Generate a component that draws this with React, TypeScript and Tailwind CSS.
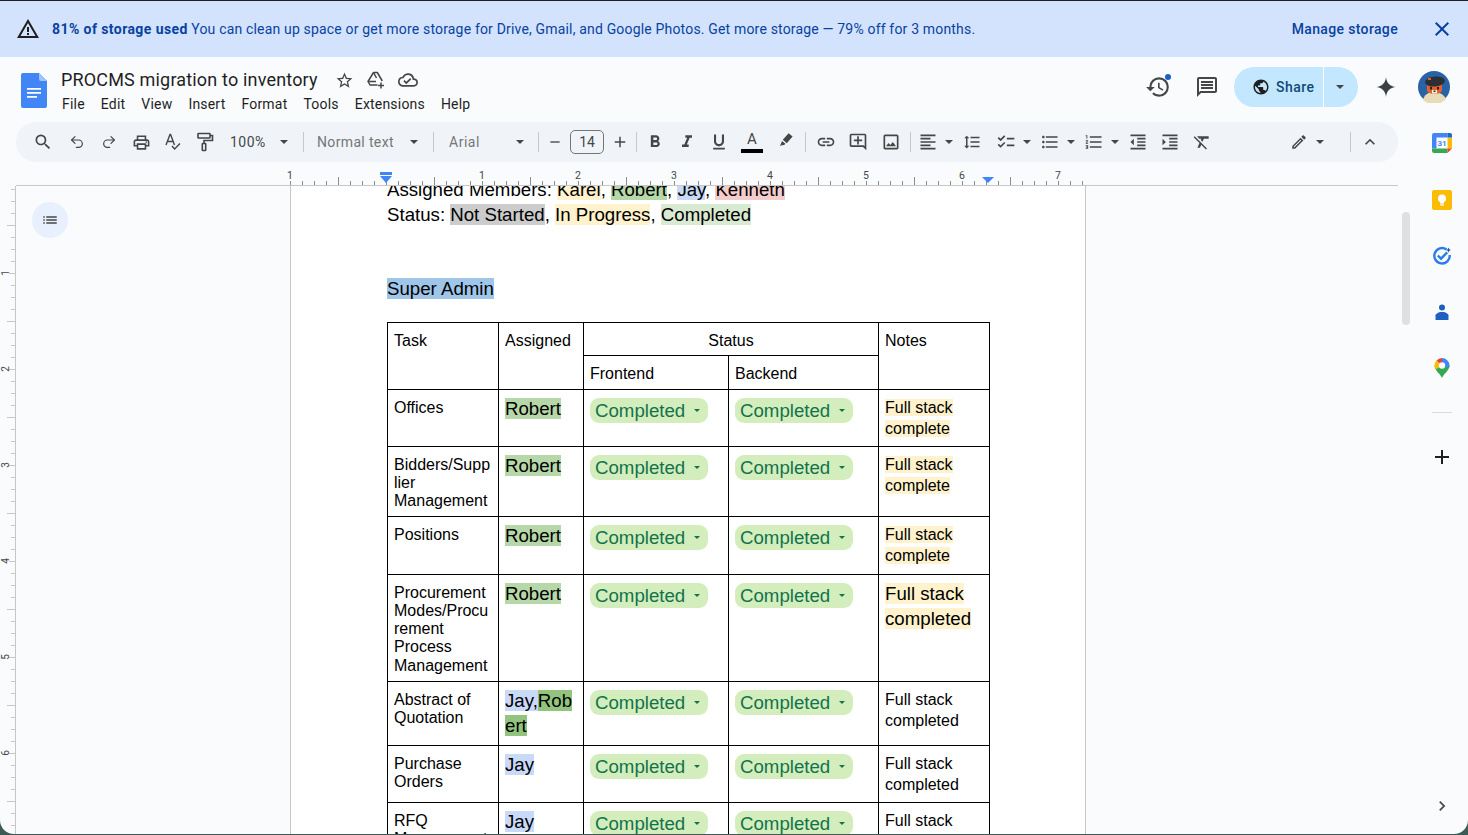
import React from 'react';
import { Redo2, Undo2 } from 'lucide-react';
import {
  MdAdd,
  MdChecklist,
  MdChevronRight,
  MdClose,
  MdExpandLess,
  MdFormatAlignLeft,
  MdFormatBold,
  MdFormatClear,
  MdFormatIndentDecrease,
  MdFormatIndentIncrease,
  MdFormatItalic,
  MdFormatLineSpacing,
  MdFormatListBulleted,
  MdFormatListNumbered,
  MdFormatUnderlined,
  MdLink,
  MdList,
  MdOutlineAddComment,
  MdOutlineCloudDone,
  MdOutlineEdit,
  MdOutlineHistory,
  MdOutlineImage,
  MdOutlineLocalPrintshop,
  MdOutlineSearch,
  MdOutlineInsertComment,
  MdPublic,
  MdRemove,
  MdStarBorder,
  MdWarningAmber,
} from 'react-icons/md';

const menus = ['File', 'Edit', 'View', 'Insert', 'Format', 'Tools', 'Extensions', 'Help'];
const rulerLabels = [
  { x: 290, text: '1' },
  { x: 482, text: '1' },
  { x: 578, text: '2' },
  { x: 674, text: '3' },
  { x: 770, text: '4' },
  { x: 866, text: '5' },
  { x: 962, text: '6' },
  { x: 1058, text: '7' },
];

const Caret = ({ className = '' }: { className?: string }) => (
  <span className={`inline-block h-0 w-0 border-x-[4px] border-t-[4px] border-x-transparent border-t-[#444746] ${className}`} />
);

const Divider = ({ className = '' }: { className?: string }) => <div className={`h-5 w-px bg-[#c7c7c7] ${className}`} />;

const ToolButton = ({ children, className = '' }: { children: React.ReactNode; className?: string }) => (
  <div className={`flex h-8 w-8 shrink-0 items-center justify-center text-[#444746] ${className}`}>{children}</div>
);

const DocsLogo = () => (
  <svg width="26" height="35" viewBox="0 0 26 35">
    <path d="M2 0h16l8 8v25a2 2 0 0 1-2 2H2a2 2 0 0 1-2-2V2a2 2 0 0 1 2-2z" fill="#4285f4" />
    <path d="M18 0l8 8h-6a2 2 0 0 1-2-2z" fill="#a1c2fa" />
    <path d="M6 15h14v1.7H6zM6 19h14v1.7H6zM6 23h10v1.7H6z" fill="#fff" />
  </svg>
);

const AddToDriveIcon = () => (
  <svg width="20" height="20" viewBox="0 0 20 20" fill="none" stroke="#444746" strokeWidth="1.5">
    <path d="M7.500 2.500h3.800l5 8.500M7.500 2.500L2 11.500l2 3.500h7.500" strokeLinejoin="round" />
    <path d="M2 11.500h8M7.500 2.500l3 5.500" />
    <path d="M15 12.500v6M12 15.500h6" />
  </svg>
);

const SpellIcon = () => (
  <svg width="18" height="18" viewBox="0 0 18 18" fill="none" stroke="#444746" strokeWidth="1.4">
    <path d="M2 12L6 1.500h.6L10.500 12M3.400 8.500h5.800" />
    <path d="M8 13l2.600 3L16 10.500" />
  </svg>
);

const PaintIcon = () => (
  <svg width="18" height="20" viewBox="0 0 18 20" fill="none" stroke="#444746" strokeWidth="1.6">
    <rect x="2" y="1.500" width="12" height="4.500" rx="0.6" />
    <path d="M14 3.500h2.500v5H8v3" />
    <rect x="6.300" y="11.500" width="3.400" height="7" rx="0.5" />
  </svg>
);

const HighlightIcon = () => (
  <svg width="16" height="16" viewBox="0 0 16 16" fill="#444746" className="-mt-[4px]">
    <path d="M10.600 1.200l4 3.400-5.800 6.600-4-3.400zM4 8.900l3.400 2.900-1.200 1.300-2.400.2L2 13.900z" />
  </svg>
);

const Avatar = () => (
  <svg width="32" height="32" viewBox="0 0 32 32">
    <circle cx="16" cy="16" r="16" fill="#2a62a8" />
    <path d="M5 29c1-5 5-8 11-8s10 3 12 7a16 16 0 0 1-23 1z" fill="#e8dcb8" />
    <path d="M9 14h15v6c-2 4-13 4-15 0z" fill="#e2622b" />
    <rect x="12" y="16" width="2" height="2.500" fill="#222" />
    <rect x="19" y="16" width="2" height="2.500" fill="#222" />
    <path d="M14 19h5v3.500h-5z" fill="#fff3df" />
    <path d="M15.500 19.500h2v1.500h-2z" fill="#222" />
    <ellipse cx="17" cy="10.500" rx="10" ry="5" fill="#2b3035" transform="rotate(-6 17 10.500)" />
    <rect x="10" y="7" width="3" height="2" fill="#e2622b" />
  </svg>
);

const CalendarIcon = () => (
  <svg width="20" height="20" viewBox="0 0 20 20">
    <rect width="20" height="20" rx="1.500" fill="#fff" />
    <path d="M0 2a2 2 0 0 1 2-2h13.500v4.500H4.500v11H0z" fill="#4285f4" />
    <path d="M15.500 4.500H20v11h-4.500z" fill="#fbbc04" />
    <path d="M0 15.500h15.500V20H2a2 2 0 0 1-2-2z" fill="#34a853" />
    <path d="M15.500 15.500H20L15.500 20z" fill="#ea4335" />
    <path d="M15.500 0H18a2 2 0 0 1 2 2v2.500h-4.500z" fill="#1967d2" />
    <text x="10" y="13.200" textAnchor="middle" fontSize="8" fontWeight="700" fill="#4285f4" fontFamily="Roboto, sans-serif">31</text>
  </svg>
);

const KeepIcon = () => (
  <svg width="20" height="20" viewBox="0 0 20 20">
    <rect width="20" height="20" rx="2" fill="#fbbc04" />
    <circle cx="10" cy="8.500" r="4" fill="#fff" />
    <rect x="8" y="11" width="4" height="2.500" fill="#fff" />
    <rect x="8.200" y="14.200" width="3.600" height="1.400" fill="#fff" />
  </svg>
);

const TasksIcon = () => (
  <svg width="20" height="20" viewBox="0 0 20 20" fill="none">
    <path d="M14.500 3.500A7.700 7.700 0 1 0 17.700 9" stroke="#2b7de9" strokeWidth="2.400" />
    <path d="M5.800 9.500l3.200 3.200 6.200-6.400" stroke="#2b7de9" strokeWidth="2.400" />
    <path d="M16.500 1.500l.8 1.700 1.700.8-1.700.8-.8 1.700-.8-1.700-1.700-.8 1.700-.8z" fill="#1a56b0" />
  </svg>
);

const ContactsIcon = () => (
  <svg width="16" height="16" viewBox="0 0 16 16">
    <circle cx="8" cy="3.400" r="3" fill="#1f5fbf" />
    <path d="M1 16v-3c0-3 3-5 7-5s7 2 7 5v3z" fill="#1f5fbf" />
    <path d="M1 16v-3c0-1 .4-2 1-2.700V16zM15 16v-3c0-1-.4-2-1-2.700V16z" fill="#8ab4f8" />
  </svg>
);

const MapsIcon = () => (
  <svg width="16" height="20" viewBox="0 0 16 20" fill="none">
    <path d="M8 20C6.500 16 .5 12.500.5 7.500h15C15.500 12.500 9.500 16 8 20z" fill="#34a853" />
    <path d="M2.500 2.500A7.500 7.500 0 0 0 .5 7.500c0 1.500.5 2.800 1.200 4L8 7.500z" fill="#fbbc04" />
    <path d="M2.500 2.500A7.500 7.500 0 0 1 8 0v7.500z" fill="#ea4335" />
    <path d="M8 0a7.500 7.500 0 0 1 7.500 7.500c0 .8-.1 1.500-.4 2.200L8 7.500z" fill="#4285f4" />
    <circle cx="8" cy="7.500" r="3.200" fill="#f9fbfd" />
  </svg>
);

const HorizontalRuler = () => {
  const ticks = Array.from({ length: 67 }, (_, i) => 290 + i * 12);
  return (
    <svg width="1382" height="24" viewBox="16 162 1382 24" className="block">
      {ticks.map((x, i) => (
        <line key={x} x1={x + 0.5} x2={x + 0.5} y1={i % 4 === 0 ? 177 : 181} y2="185" stroke="#8a8d90" strokeWidth="1" />
      ))}
      {rulerLabels.map((label) => (
        <g key={label.x}>
          <rect x={label.x - 5} y="169" width="10" height="12" fill="#f9fbfd" />
          <text x={label.x} y="179" textAnchor="middle" fontSize="10.500" fill="#444746" fontFamily="Roboto, sans-serif">
            {label.text}
          </text>
        </g>
      ))}
      <line x1="16" x2="1398" y1="185.500" y2="185.500" stroke="#c7c7c7" />
      <rect x="380" y="172" width="12" height="3" fill="#4285f4" />
      <path d="M380 176h12l-6 7z" fill="#4285f4" />
      <path d="M982 177h12l-6 6z" fill="#4285f4" />
    </svg>
  );
};

const VerticalRuler = () => {
  const ticks = Array.from({ length: 55 }, (_, i) => 189 + i * 12);
  const labels = [273, 369, 465, 561, 657, 753];
  return (
    <svg width="16" height="649" viewBox="0 186 16 649" className="block shrink-0">
      {ticks.map((y) => (
        <line key={y} x1={(y - 225) % 48 === 0 ? 7 : 11} x2="15" y1={y + 0.5} y2={y + 0.5} stroke="#c7c7c7" />
      ))}
      {labels.map((y, i) => (
        <g key={y}>
          <rect x="0" y={y - 5} width="9" height="10" fill="#f9fbfd" />
          <text
            x="5"
            y={y + 4}
            textAnchor="middle"
            fontSize="10"
            fill="#444746"
            fontFamily="Roboto, sans-serif"
            transform={`rotate(-90 5 ${y})`}
          >
            {i + 1}
          </text>
        </g>
      ))}
      <line x1="15.500" x2="15.500" y1="186" y2="835" stroke="#c7c7c7" />
    </svg>
  );
};

const StatusPill = () => (
  <div className="flex h-[25px] w-[118px] items-center rounded-[9px] bg-[#d4edbc] pl-[5px] text-[18.670px] leading-[25px] text-[#11734b]">
    Completed
    <span className="ml-[9px] h-0 w-0 border-x-[3px] border-t-[3px] border-x-transparent border-t-[#11734b]" />
  </div>
);

const cell = 'border border-black p-0 align-top';

const TaskCell = ({ lines }: { lines: string[] }) => (
  <td className={`${cell} px-[6px] pt-[9px] text-[16px] leading-[18.300px]`}>
    {lines.map((line) => (
      <div key={line}>{line}</div>
    ))}
  </td>
);

const Mark = ({ color, children }: { color: string; children: React.ReactNode }) => (
  <span className={color}>{children}</span>
);

const AssignedCell = ({ children }: { children: React.ReactNode }) => (
  <td className={`${cell} px-[6px] pt-[6px] text-[18.670px] leading-[25px]`}>{children}</td>
);

const PillCell = () => (
  <td className={`${cell} px-[6px] pt-[8px]`}>
    <StatusPill />
  </td>
);

const NotesCell = ({ highlight, large, second }: { highlight?: boolean; large?: boolean; second: string }) => (
  <td className={`${cell} px-[6px] ${large ? 'pt-[6px] text-[18.670px] leading-[25px]' : 'pt-[7px] text-[16px] leading-[21.300px]'}`}>
    <div>
      <span className={highlight ? 'bg-[#fff2cc]' : ''}>Full stack</span>
    </div>
    <div>
      <span className={highlight ? 'bg-[#fff2cc]' : ''}>{second}</span>
    </div>
  </td>
);

const StatusRow = ({
  height,
  task,
  assigned,
  notes,
}: {
  height: string;
  task: string[];
  assigned: React.ReactNode;
  notes: React.ReactNode;
}) => (
  <tr className={height}>
    <TaskCell lines={task} />
    <AssignedCell>{assigned}</AssignedCell>
    <PillCell />
    <PillCell />
    {notes}
  </tr>
);

const robert = <Mark color="bg-[#b6d7a8]">Robert</Mark>;
const jay = <Mark color="bg-[#c9daf8]">Jay</Mark>;

const App: React.FC = () => {
  return (
    <div className="h-[835px] w-[1468px] overflow-hidden bg-[#3d5a54] font-['Roboto',sans-serif]">
      <div className="flex h-[834px] w-full flex-col overflow-hidden rounded-b-[14px] bg-[#f9fbfd]">
        <div className="h-px shrink-0 bg-[#1f1f1f]" />

        {/* storage banner */}
        <div className="flex h-[56px] shrink-0 items-center bg-[#d3e3fd] pl-[16px] pr-[14px]">
          <MdWarningAmber size={24} className="text-[#1f1f1f]" />
          <p className="ml-[12px] text-[14px] text-[#0842a0]">
            <span className="font-bold tracking-[0.42px]">81% of storage used</span>{' '}
            <span className="tracking-[0.175px]">
              You can clean up space or get more storage for Drive, Gmail, and Google Photos. Get more storage — 79% off for 3 months.
            </span>
          </p>
          <span className="ml-auto text-[14px] font-medium tracking-[0.35px] text-[#0842a0]">Manage storage</span>
          <MdClose size={24} className="ml-[32px] text-[#0842a0]" />
        </div>

        {/* title and menus */}
        <div className="flex h-[65px] shrink-0 items-start pl-[21px] pr-[18px]">
          <div className="mt-[16px]">
            <DocsLogo />
          </div>
          <div className="ml-[14px] mt-[11px]">
            <div className="flex h-[24px] items-center">
              <span className="text-[18px] leading-[24px] tracking-[0.17px] text-[#1f1f1f]">PROCMS migration to inventory</span>
              <MdStarBorder size={19} className="ml-[17px] text-[#444746]" />
              <div className="ml-[12px]"><AddToDriveIcon /></div>
              <MdOutlineCloudDone size={20} className="ml-[12px] text-[#444746]" />
            </div>
            <div className="mt-[2px] flex gap-[16px] pl-px text-[14px] leading-[20px] tracking-[0.2px] text-[#1f1f1f]">
              {menus.map((menu) => (
                <span key={menu}>{menu}</span>
              ))}
            </div>
          </div>
          <div className="ml-auto mt-[10px] flex items-center">
            <div className="relative">
              <MdOutlineHistory size={26} className="text-[#444746]" />
              <span className="absolute right-0 top-0 h-[6px] w-[6px] rounded-full bg-[#1a5fc4]" />
            </div>
            <MdOutlineInsertComment size={24} className="ml-[24px] -scale-x-100 text-[#444746]" />
            <div className="ml-[15px] flex h-[40px] w-[124px] items-center rounded-full bg-[#c2e7ff] text-[#001d35]">
              <MdPublic size={18} className="ml-[18px] text-[#1f1f1f]" />
              <span className="ml-[6px] text-[14px] font-medium tracking-[0.5px] text-[#0f4a75]">Share</span>
              <div className="ml-[8px] h-full w-px bg-white" />
              <Caret className="ml-[12px] border-t-[#1f1f1f]" />
            </div>
            <svg width="24" height="24" viewBox="0 0 24 24" className="ml-[16px]">
              <path d="M12 2c.6 6 4 9.400 10 10-6 .6-9.400 4-10 10-.6-6-4-9.400-10-10 6-.6 9.400-4 10-10z" fill="#3c4043" />
            </svg>
            <div className="ml-[20px]">
              <Avatar />
            </div>
          </div>
        </div>

        <div className="flex min-h-0 flex-1">
          <div className="flex min-w-0 flex-1 flex-col">
            {/* toolbar */}
            <div className="ml-[16px] flex h-[40px] w-[1382px] shrink-0 items-center rounded-full bg-[#f0f4f9] pl-[11px] text-[#444746]">
              <ToolButton><MdOutlineSearch size={20} /></ToolButton>
              <ToolButton className="ml-[2px]"><Undo2 size={16} strokeWidth={1.8} /></ToolButton>
              <ToolButton><Redo2 size={16} strokeWidth={1.8} /></ToolButton>
              <ToolButton><MdOutlineLocalPrintshop size={19} /></ToolButton>
              <ToolButton><SpellIcon /></ToolButton>
              <ToolButton><PaintIcon /></ToolButton>
              <span className="ml-[9px] w-[37px] text-[14px] tracking-[0.5px]">100%</span>
              <Caret className="ml-[13px]" />
              <Divider className="ml-[15px]" />
              <span className="ml-[13px] w-[78px] whitespace-nowrap text-[14px] tracking-[0.35px] text-[#747775]">Normal text</span>
              <Caret className="ml-[15px]" />
              <Divider className="ml-[15px]" />
              <span className="ml-[15px] w-[31px] text-[14px] tracking-[0.5px] text-[#747775]">Arial</span>
              <Caret className="ml-[36px]" />
              <Divider className="ml-[14px]" />
              <ToolButton><MdRemove size={16} /></ToolButton>
              <div className="ml-[-1px] flex h-[24px] w-[34px] shrink-0 items-center justify-center rounded-[5px] border border-[#747775] text-[14px]">14</div>
              <ToolButton><MdAdd size={18} /></ToolButton>
              <Divider />
              <ToolButton className="ml-[2px]"><MdFormatBold size={20} /></ToolButton>
              <ToolButton><MdFormatItalic size={20} /></ToolButton>
              <ToolButton><MdFormatUnderlined size={20} /></ToolButton>
              <div className="ml-[1px] flex h-8 w-8 shrink-0 flex-col items-center justify-center">
                <span className="text-[15px] leading-[16px] text-[#444746]">A</span>
                <span className="mt-[2px] h-[4px] w-[22px] bg-black" />
              </div>
              <ToolButton className="ml-[2px]"><HighlightIcon /></ToolButton>
              <Divider className="ml-[3px]" />
              <ToolButton className="ml-[4px]"><MdLink size={20} /></ToolButton>
              <ToolButton><MdOutlineAddComment size={20} /></ToolButton>
              <ToolButton className="ml-[1px]"><MdOutlineImage size={20} /></ToolButton>
              <Divider className="ml-[3px]" />
              <ToolButton className="ml-[1px]"><MdFormatAlignLeft size={20} /></ToolButton>
              <Caret className="ml-[1px]" />
              <ToolButton className="ml-[3px]"><MdFormatLineSpacing size={18} /></ToolButton>
              <ToolButton className="ml-[2px]"><MdChecklist size={20} /></ToolButton>
              <Caret className="ml-[1px]" />
              <ToolButton className="ml-[3px]"><MdFormatListBulleted size={20} /></ToolButton>
              <Caret className="ml-[1px]" />
              <ToolButton className="ml-[3px]"><MdFormatListNumbered size={20} /></ToolButton>
              <Caret className="ml-[1px]" />
              <ToolButton className="ml-[3px]"><MdFormatIndentDecrease size={20} /></ToolButton>
              <ToolButton><MdFormatIndentIncrease size={20} /></ToolButton>
              <ToolButton><MdFormatClear size={20} /></ToolButton>
              <ToolButton className="ml-[65px]"><MdOutlineEdit size={18} /></ToolButton>
              <Caret className="ml-[1px]" />
              <Divider className="ml-[26px]" />
              <ToolButton className="ml-[3px]"><MdExpandLess size={20} /></ToolButton>
            </div>

            {/* ruler */}
            <div className="ml-[16px] h-[24px] shrink-0">
              <HorizontalRuler />
            </div>

            {/* canvas */}
            <div className="flex min-h-0 flex-1">
              <VerticalRuler />
              <div className="w-[274px] shrink-0 pl-[16px] pt-[16px]">
                <div className="flex h-[36px] w-[36px] items-center justify-center rounded-full bg-[#e8f0fe] text-[#444746]">
                  <MdList size={18} />
                </div>
              </div>
              <div className="h-full w-[796px] shrink-0 overflow-hidden border-x border-[#c7c7c7] bg-white pl-[96px] font-['Liberation_Sans',Arial,sans-serif] text-black">
                <div className="-mt-[8px] text-[18.670px] leading-[24.500px]">
                  <div>
                    Assigned Members: <Mark color="bg-[#fff2cc]">Karel</Mark>, <Mark color="bg-[#b6d7a8]">Robert</Mark>,{' '}
                    <Mark color="bg-[#c9daf8]">Jay</Mark>, <Mark color="bg-[#f4cccc]">Kenneth</Mark>
                  </div>
                  <div>
                    Status: <Mark color="bg-[#cccccc]">Not Started</Mark>, <Mark color="bg-[#fff2cc]">In Progress</Mark>,{' '}
                    <Mark color="bg-[#d9ead3]">Completed</Mark>
                  </div>
                  <div className="h-[50px]" />
                  <div>
                    <Mark color="bg-[#9fc5e8]">Super Admin</Mark>
                  </div>
                </div>
                <table className="mt-[20px] w-[603px] table-fixed border-collapse">
                  <colgroup>
                    <col className="w-[111px]" />
                    <col className="w-[85px]" />
                    <col className="w-[145px]" />
                    <col className="w-[150px]" />
                    <col className="w-[111px]" />
                  </colgroup>
                  <tbody className="text-[16px] leading-[18.300px]">
                    <tr className="h-[33px]">
                      <td rowSpan={2} className={`${cell} px-[6px] pt-[9px]`}>Task</td>
                      <td rowSpan={2} className={`${cell} px-[6px] pt-[9px]`}>Assigned</td>
                      <td colSpan={2} className={`${cell} pt-[9px] text-center`}>Status</td>
                      <td rowSpan={2} className={`${cell} px-[6px] pt-[9px]`}>Notes</td>
                    </tr>
                    <tr className="h-[34px]">
                      <td className={`${cell} px-[6px] pt-[9px]`}>Frontend</td>
                      <td className={`${cell} px-[6px] pt-[9px]`}>Backend</td>
                    </tr>
                    <StatusRow height="h-[57px]" task={['Offices']} assigned={robert} notes={<NotesCell highlight second="complete" />} />
                    <StatusRow height="h-[70px]" task={['Bidders/Supp', 'lier', 'Management']} assigned={robert} notes={<NotesCell highlight second="complete" />} />
                    <StatusRow height="h-[58px]" task={['Positions']} assigned={robert} notes={<NotesCell highlight second="complete" />} />
                    <StatusRow
                      height="h-[107px]"
                      task={['Procurement', 'Modes/Procu', 'rement', 'Process', 'Management']}
                      assigned={robert}
                      notes={<NotesCell highlight large second="completed" />}
                    />
                    <StatusRow
                      height="h-[64px]"
                      task={['Abstract of', 'Quotation']}
                      assigned={
                        <>
                          <Mark color="bg-[#c9daf8]">Jay,</Mark>
                          <Mark color="bg-[#93c47d]">Rob</Mark>
                          <br />
                          <Mark color="bg-[#93c47d]">ert</Mark>
                        </>
                      }
                      notes={<NotesCell second="completed" />}
                    />
                    <StatusRow height="h-[57px]" task={['Purchase', 'Orders']} assigned={jay} notes={<NotesCell second="completed" />} />
                    <StatusRow height="h-[64px]" task={['RFQ', 'Management']} assigned={jay} notes={<NotesCell second="completed" />} />
                  </tbody>
                </table>
              </div>
              <div className="flex-1 pl-[316px] pt-[26px]">
                <div className="h-[113px] w-[8px] rounded-full bg-[#dfe1e0]" />
              </div>
            </div>
          </div>

          {/* side panel */}
          <div className="flex w-[52px] shrink-0 flex-col items-center pb-[18px] pt-[11px]">
            <div className="flex h-[20px] items-center"><CalendarIcon /></div>
            <div className="mt-[37px] flex h-[20px] items-center"><KeepIcon /></div>
            <div className="mt-[36px] flex h-[20px] items-center"><TasksIcon /></div>
            <div className="mt-[36px] flex h-[20px] items-center"><ContactsIcon /></div>
            <div className="mt-[36px] flex h-[20px] items-center"><MapsIcon /></div>
            <div className="mt-[34px] h-px w-[20px] bg-[#dadce0]" />
            <MdAdd size={24} className="mt-[32px] text-[#1f1f1f]" />
            <MdChevronRight size={20} className="mt-auto text-[#444746]" />
          </div>
        </div>
      </div>
    </div>
  );
};

export default App;
